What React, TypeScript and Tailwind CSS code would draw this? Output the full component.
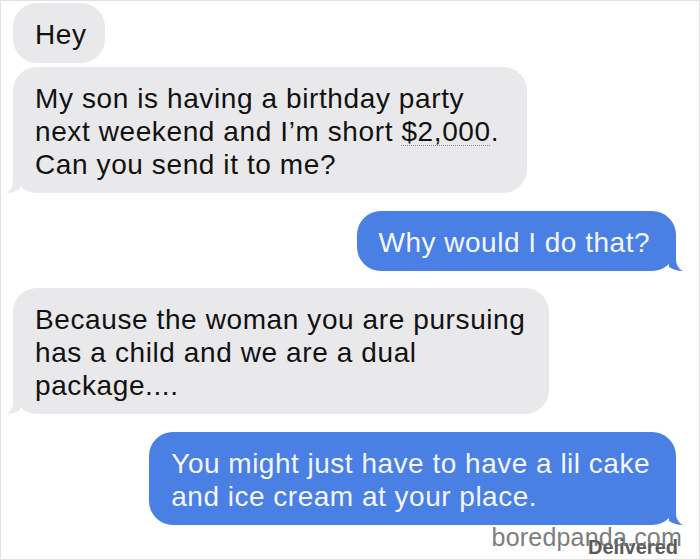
import React from "react";

const GRAY = "#e9e9eb";
const BLUE = "#4a7fe3";

function TailLeft() {
  return (
    <svg className="absolute bottom-0 left-[-7px]" width="24" height="24" viewBox="0 0 24 24">
      <path d="M7 0 L7 12 C7 18 4 22 0 24 C5 24 10 22.5 14 20 L14 0 Z" fill={GRAY} />
    </svg>
  );
}

function TailRight() {
  return (
    <svg className="absolute bottom-0 right-[-7px]" width="24" height="24" viewBox="0 0 24 24">
      <path d="M17 0 L17 12 C17 18 20 22 24 24 C19 24 14 22.5 10 20 L10 0 Z" fill={BLUE} />
    </svg>
  );
}

function Left({ children, tail = true, pad = "pr-[26px]" }: { children: React.ReactNode; tail?: boolean; pad?: string }) {
  return (
    <div className="flex justify-start pl-3">
      <div className={"relative w-fit rounded-[24px] bg-[#e9e9eb] pl-[22px] pt-[15px] pb-[12px] text-[28px] leading-[33px] tracking-[0.6px] text-[#111] " + pad}>
        {tail && <TailLeft />}
        <div className="relative">{children}</div>
      </div>
    </div>
  );
}

function Right({ children }: { children: React.ReactNode }) {
  return (
    <div className="flex justify-end pr-[23px]">
      <div className="relative w-fit rounded-[24px] bg-[#4a7fe3] pl-[22px] pr-[26px] pt-[15px] pb-[12px] text-[28px] leading-[33px] tracking-[0.5px] text-[#f4f7ff]">
        <TailRight />
        <div className="relative">{children}</div>
      </div>
    </div>
  );
}

export default function App() {
  return (
    <div
      className="relative w-[700px] h-[560px] overflow-hidden bg-white border border-[#e2e2e2]"
      style={{ fontFamily: "'Liberation Sans', Arial, sans-serif" }}
    >
      <div className="flex flex-col pt-[2px]">
        <Left tail={false} pad="pr-[18px]">Hey</Left>
        <div className="h-[4px]" />
        <Left pad="pr-[28px]">
          My son is having a birthday party
          <br />
          next weekend and I’m short{" "}
          <span className="underline decoration-dotted decoration-[#888] decoration-1 underline-offset-4">$2,000</span>.
          <br />
          Can you send it to me?
        </Left>
        <div className="h-[18px]" />
        <Right>Why would I do that?</Right>
        <div className="h-[17px]" />
        <Left pad="pr-[24px]">
          Because the woman you are pursuing
          <br />
          has a child and we are a dual
          <br />
          package....
        </Left>
        <div className="h-[18px]" />
        <Right>
          You might just have to have a lil cake
          <br />
          and ice cream at your place.
        </Right>
        <div className="flex justify-end pr-[21px] mt-[11px]">
          <span className="text-[20px] leading-[22px] font-bold text-[#5a5a5a]">Delivered</span>
        </div>
      </div>
      <div className="absolute right-[17px] bottom-[8px] text-[25px] leading-[28px] tracking-[0.2px] text-[#707070] opacity-90">
        boredpanda.com
      </div>
    </div>
  );
}
